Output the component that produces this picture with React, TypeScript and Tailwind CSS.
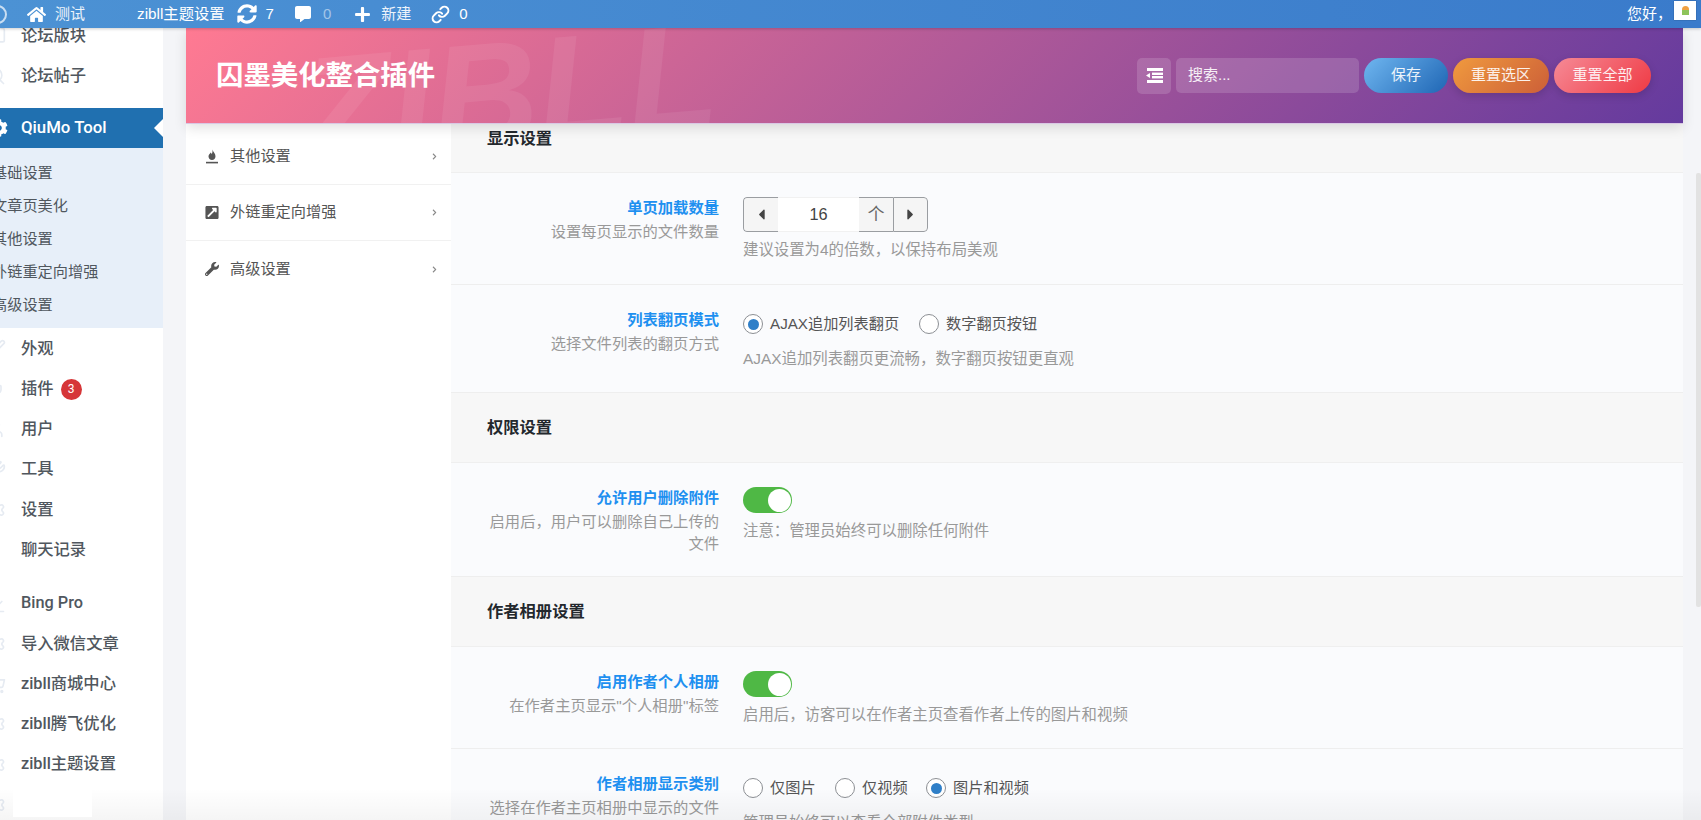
import { ReactNode } from "react";
import {
  FaHome,
  FaSyncAlt,
  FaCommentAlt,
  FaPlus,
  FaExternalLinkSquareAlt,
  FaWrench,
  FaCog,
  FaChevronRight,
  FaCaretLeft,
  FaCaretRight,
} from "react-icons/fa";
import {
  Link,
  MessageSquare,
  Search,
  Brush,
  Plug,
  User,
  Wrench,
  Settings,
  LineChart,
  ShoppingCart,
} from "lucide-react";

const subMenu = ["基础设置", "文章页美化", "其他设置", "外链重定向增强", "高级设置"];

function MenuItem({ icon, children }: { icon: ReactNode; children: ReactNode }) {
  return (
    <div className="flex h-[40.3px] items-center pt-[2px] font-['Roboto','Noto_Sans_CJK_SC',sans-serif] text-[16.3px] font-medium text-[#50575e]">
      <span className="ml-[-14px] mr-[15px] flex w-[20px] shrink-0 justify-center text-[#e6ebf2]">{icon}</span>
      {children}
    </div>
  );
}

function Sidebar() {
  return (
    <aside className="w-[163px] shrink-0 overflow-hidden bg-white">
      <div className="mt-[-13px]">
        <MenuItem icon={<MessageSquare size={20} />}>论坛版块</MenuItem>
        <MenuItem icon={<Search size={20} />}>论坛帖子</MenuItem>
      </div>
      <div className="relative mt-[12px] flex h-[40px] items-center bg-[#2070b0] font-['Roboto',sans-serif] text-[16.8px] font-medium text-white">
        <FaCog className="ml-[-10px] mr-[13px] shrink-0" size={18} />
        QiuMo Tool
        <span className="absolute right-0 top-[11px] h-0 w-0 border-y-[9px] border-r-[9px] border-y-transparent border-r-white" />
      </div>
      <div className="bg-[#e7eff9] pb-[5.5px] pt-[9.5px] text-[15.2px] text-[#50575e]">
        {subMenu.map((s) => (
          <div key={s} className="ml-[-8px] flex h-[33px] items-center whitespace-nowrap">
            {s}
          </div>
        ))}
      </div>
      <MenuItem icon={<Brush size={20} />}>外观</MenuItem>
      <MenuItem icon={<Plug size={20} />}>
        插件
        <span className="ml-[7px] flex h-[21px] w-[21px] items-center justify-center rounded-full bg-[#d63638] text-[12px] font-normal text-white">
          3
        </span>
      </MenuItem>
      <MenuItem icon={<User size={20} />}>用户</MenuItem>
      <MenuItem icon={<Wrench size={20} />}>工具</MenuItem>
      <MenuItem icon={<Settings size={20} />}>设置</MenuItem>
      <MenuItem icon={<span />}>聊天记录</MenuItem>
      <div className="mt-[13px]">
        <MenuItem icon={<LineChart size={20} />}>Bing Pro</MenuItem>
        <MenuItem icon={<Settings size={20} />}>导入微信文章</MenuItem>
        <MenuItem icon={<ShoppingCart size={20} />}>zibll商城中心</MenuItem>
        <MenuItem icon={<Settings size={20} />}>zibll腾飞优化</MenuItem>
        <MenuItem icon={<Settings size={20} />}>zibll主题设置</MenuItem>
        <MenuItem icon={<Settings size={20} />}>{""}</MenuItem>
      </div>
    </aside>
  );
}

function TopBar() {
  return (
    <div className="relative z-20 flex h-[28px] shrink-0 items-center bg-[linear-gradient(90deg,#4c92d4,#3a7bcb)] text-[15px] text-white shadow-[0_1px_3px_rgba(0,0,0,0.2)]">
      <span className="ml-[-12px] h-[19px] w-[19px] shrink-0 rounded-full border-2 border-white/70" />
      <FaHome className="ml-[20px] shrink-0" size={19} />
      <span className="ml-[9px] text-white/90">测试</span>
      <span className="ml-[52px] text-[15.3px]">zibll主题设置</span>
      <FaSyncAlt className="ml-[12px] shrink-0" size={20} />
      <span className="ml-[9px]">7</span>
      <FaCommentAlt className="ml-[21px] shrink-0" size={16} />
      <span className="ml-[12px] text-white/50">0</span>
      <FaPlus className="ml-[23px] shrink-0" size={17} />
      <span className="ml-[10px] text-white/90">新建</span>
      <Link className="ml-[20px] shrink-0" size={19} strokeWidth={2.5} />
      <span className="ml-[9px]">0</span>
      <span className="ml-auto">您好，</span>
      <span className="ml-[2px] mr-[5px] mt-[-8px] flex h-[19px] w-[22px] items-center justify-center bg-white shadow-[0_0_1px_rgba(0,0,0,0.5)]">
        <span className="h-[9px] w-[7px] rounded-t-full bg-[linear-gradient(180deg,#f0a040_50%,#8ec45a_50%)]" />
      </span>
    </div>
  );
}

function HeaderButton({ className, children }: { className: string; children: ReactNode }) {
  return (
    <button className={`flex h-[35px] items-center justify-center rounded-full text-[15px] text-white/90 ${className}`}>
      {children}
    </button>
  );
}

function OutdentIcon() {
  return (
    <svg width="17" height="15" viewBox="0 0 17 15" fill="currentColor">
      <rect x="1" y="0" width="16" height="3" />
      <rect x="6" y="4.6" width="11" height="2.4" />
      <rect x="6" y="8" width="11" height="2.4" />
      <rect x="1" y="12" width="16" height="3" />
      <path d="M0 7.5L4 5V10Z" />
    </svg>
  );
}

function Header() {
  return (
    <header className="relative z-10 flex h-[96px] shrink-0 items-center overflow-hidden border-b border-[#d9c8e4] bg-[linear-gradient(135deg,#ff7a92,#643a9e)] pl-[30px] pr-[32px] shadow-[0_4px_12px_rgba(0,0,0,0.12)]">
      <span className="absolute left-[122px] top-[9px] origin-bottom-left -rotate-[5deg] text-[147px] font-bold italic leading-none text-white/[0.07]">ZIBLL</span>
      <h1 className="relative text-[27.4px] font-bold text-white">囚墨美化整合插件</h1>
      <div className="relative ml-auto flex items-center gap-[5px]">
        <span className="flex h-[36px] w-[34px] items-center justify-center rounded-[5px] bg-white/15 text-white">
          <OutdentIcon />
        </span>
        <span className="flex h-[35px] w-[183px] items-center rounded-[5px] bg-white/15 pl-[12px] text-[15px] text-white/90">
          搜索...
        </span>
        <HeaderButton className="w-[84px] bg-[linear-gradient(135deg,#6fb6f0,#1f66b4)]">保存</HeaderButton>
        <HeaderButton className="w-[96px] bg-[linear-gradient(135deg,#f09a3e,#cc5f38)] shadow-[0_3px_8px_rgba(0,0,0,0.15)]">重置选区</HeaderButton>
        <HeaderButton className="w-[97px] bg-[linear-gradient(135deg,#f68a96,#ef3a44)] shadow-[0_3px_8px_rgba(0,0,0,0.15)]">重置全部</HeaderButton>
      </div>
    </header>
  );
}

function SideNavItem({ icon, label, border }: { icon: ReactNode; label: string; border?: boolean }) {
  return (
    <div className={`flex h-[56px] items-center pl-[19px] pr-[13px] text-[15.2px] text-[#555] ${border ? "border-b border-[#f1f1f1]" : ""}`}>
      <span className="mr-[11px] flex w-[14px] justify-center text-[#555]">{icon}</span>
      {label}
      <FaChevronRight className="ml-auto text-[#888]" size={7} />
    </div>
  );
}

function FlameIcon() {
  return (
    <svg width="14" height="15" viewBox="0 0 14 15" fill="currentColor">
      <path d="M7.5 0.5C8 3 10.5 4.5 10.5 7.2C10.5 9.4 9 11 7 11C5 11 3.5 9.5 3.5 7.6C3.5 5.8 5 5 5.6 3.6C6.2 4 6.6 4.5 6.7 5.2C7.4 4 7.7 2 7.5 0.5Z" />
      <rect x="1" y="12.8" width="12" height="1.6" />
    </svg>
  );
}

function SideNav() {
  return (
    <nav className="w-[265px] shrink-0 bg-white pt-[5px]">
      <SideNavItem icon={<FlameIcon />} label="其他设置" border />
      <SideNavItem icon={<FaExternalLinkSquareAlt size={15} />} label="外链重定向增强" border />
      <SideNavItem icon={<FaWrench size={14} />} label="高级设置" />
    </nav>
  );
}

function SectionTitle({ children, className }: { children: ReactNode; className: string }) {
  return (
    <div className={`flex shrink-0 items-center border-b border-[#efefef] bg-[#f7f7f7] pl-[36px] text-[16.3px] font-bold text-[#23282d] ${className}`}>
      {children}
    </div>
  );
}

function Row({ title, desc, height, children }: { title: string; desc: ReactNode; height: string; children: ReactNode }) {
  return (
    <div className={`flex shrink-0 gap-[24px] border-b border-[#eeeeee] bg-[#fafbfd] pt-[24px] ${height}`}>
      <div className="w-[268px] shrink-0 pl-[30px] text-right text-[15.3px] leading-[22px]">
        <div className="font-bold text-[#1e90f0]">{title}</div>
        <div className="mt-[2px] text-[#999]">{desc}</div>
      </div>
      <div className="min-w-0 flex-1">{children}</div>
    </div>
  );
}

function Help({ className, children }: { className: string; children: ReactNode }) {
  return <div className={`text-[15.4px] leading-[22px] text-[#999] ${className}`}>{children}</div>;
}

function Radio({ label, checked, width }: { label: string; checked?: boolean; width: string }) {
  return (
    <label className={`flex items-center gap-[7px] text-[15.2px] text-[#555] ${width}`}>
      <span className="flex h-[20px] w-[20px] shrink-0 items-center justify-center rounded-full border border-[#8c8f94] bg-white">
        {checked && <span className="h-[11px] w-[11px] rounded-full bg-[#2f7fc8]" />}
      </span>
      {label}
    </label>
  );
}

function Toggle() {
  return (
    <div className="flex h-[26px] w-[49px] items-center justify-end rounded-full bg-[#4fb845] pr-[1px]">
      <span className="h-[23px] w-[23px] rounded-full bg-white" />
    </div>
  );
}

function NumberField() {
  return (
    <div className="flex h-[35px] w-[185px] overflow-hidden rounded-[4px] text-[#444]">
      <span className="flex w-[35px] items-center justify-center rounded-l-[4px] border border-r-0 border-[#9a9da1] bg-[#f5f5f5]">
        <FaCaretLeft size={17} />
      </span>
      <span className="flex w-[81px] items-center justify-center border-y border-[#f1f1f1] bg-white text-[16.3px]">16</span>
      <span className="flex w-[34px] items-center justify-center border-y border-[#9a9da1] bg-[#f5f5f5] text-[17px] text-[#666]">个</span>
      <span className="flex w-[35px] items-center justify-center rounded-r-[4px] border border-[#9a9da1] bg-[#f5f5f5]">
        <FaCaretRight size={17} />
      </span>
    </div>
  );
}

function Content() {
  return (
    <div className="flex min-w-0 flex-1 flex-col overflow-hidden bg-[#fafbfd]">
      <SectionTitle className="h-[49px] pb-[19px]">显示设置</SectionTitle>
      <Row title="单页加载数量" desc="设置每页显示的文件数量" height="h-[112px]">
        <NumberField />
        <Help className="mt-[7px]">建议设置为4的倍数，以保持布局美观</Help>
      </Row>
      <Row title="列表翻页模式" desc="选择文件列表的翻页方式" height="h-[108px]">
        <div className="mt-[5px] flex h-[20px] items-center">
          <Radio label="AJAX追加列表翻页" checked width="w-[176px]" />
          <Radio label="数字翻页按钮" width="w-[140px]" />
        </div>
        <Help className="mt-[14px]">AJAX追加列表翻页更流畅，数字翻页按钮更直观</Help>
      </Row>
      <SectionTitle className="h-[70px]">权限设置</SectionTitle>
      <Row title="允许用户删除附件" desc="启用后，用户可以删除自己上传的文件" height="h-[114px]">
        <Toggle />
        <Help className="mt-[7px]">注意：管理员始终可以删除任何附件</Help>
      </Row>
      <SectionTitle className="h-[70px]">作者相册设置</SectionTitle>
      <Row title="启用作者个人相册" desc={'在作者主页显示"个人相册"标签'} height="h-[102px]">
        <Toggle />
        <Help className="mt-[7px]">启用后，访客可以在作者主页查看作者上传的图片和视频</Help>
      </Row>
      <Row title="作者相册显示类别" desc="选择在作者主页相册中显示的文件" height="h-[120px]">
        <div className="mt-[5px] flex h-[20px] items-center">
          <Radio label="仅图片" width="w-[92px]" />
          <Radio label="仅视频" width="w-[91px]" />
          <Radio label="图片和视频" checked width="w-[120px]" />
        </div>
        <Help className="mt-[14px]">管理员始终可以查看全部附件类型</Help>
      </Row>
    </div>
  );
}

export default function App() {
  return (
    <div className="relative flex h-[820px] w-[1701px] flex-col overflow-hidden bg-[#f4f5f8] font-['Liberation_Sans','Noto_Sans_CJK_SC',sans-serif]">
      <TopBar />
      <div className="flex min-h-0 flex-1">
        <Sidebar />
        <main className="ml-[23px] mr-[18px] flex min-w-0 flex-1 flex-col">
          <Header />
          <div className="flex min-h-0 flex-1">
            <SideNav />
            <Content />
          </div>
        </main>
      </div>
      {/* scrollbar thumb + bottom fade sit over the page */}
      <span className="absolute right-0 top-[173px] h-[434px] w-[5px] rounded-[2px] bg-[#e2e2e2]" />
      <span className="absolute bottom-0 left-0 right-0 h-[32px] bg-[linear-gradient(180deg,rgba(0,0,0,0),rgba(0,0,0,0.04))]" />
      <span className="absolute bottom-[3px] left-[13px] h-[27px] w-[79px] bg-white" />
    </div>
  );
}
